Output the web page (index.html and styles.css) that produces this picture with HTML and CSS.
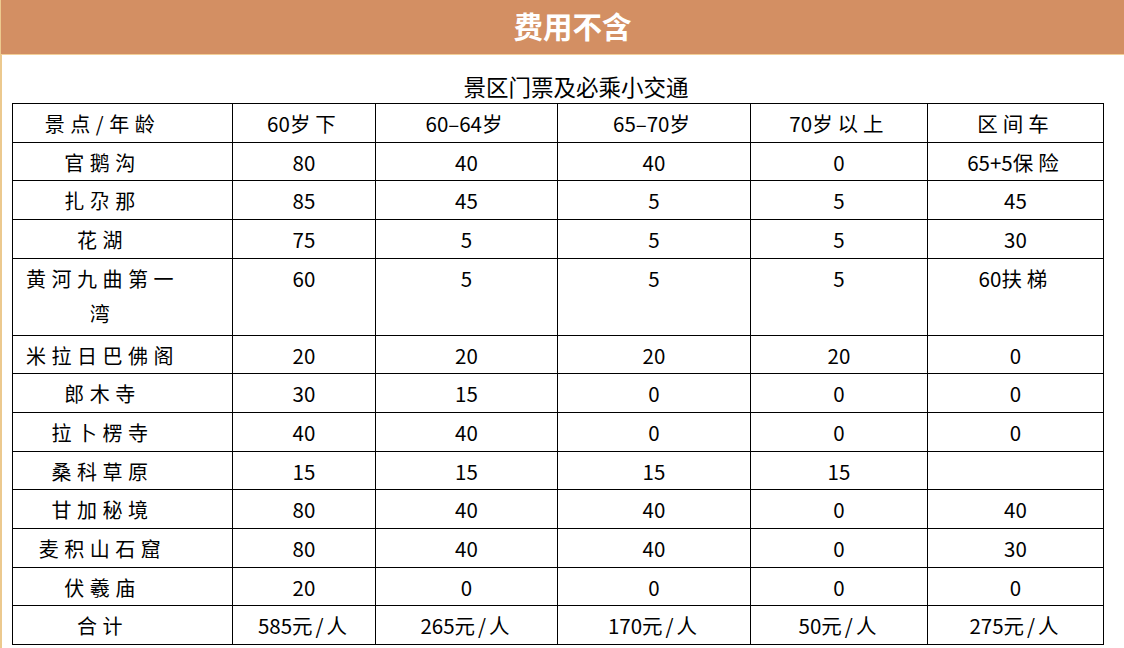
FILE: index.html
```html
<!DOCTYPE html>
<html lang="zh-CN">
<head>
<meta charset="utf-8">
<title>费用不含</title>
<link rel="stylesheet" href="styles.css">
</head>
<body>
<div class="page">
  <div class="banner">费用不含</div>
  <div class="caption">景区门票及必乘小交通</div>
  <table class="fees">
    <colgroup>
      <col class="c1"><col class="c2"><col class="c3"><col class="c4"><col class="c5"><col class="c6">
    </colgroup>
    <tr><td class="name">景点/年龄</td><td>60<span class="cj">岁下</span></td><td>60–64<span class="cj">岁</span></td><td>65–70<span class="cj">岁</span></td><td>70<span class="cj">岁以上</span></td><td class="cj">区间车</td></tr>
    <tr><td class="name">官鹅沟</td><td>80</td><td>40</td><td>40</td><td>0</td><td>65+5<span class="cj">保险</span></td></tr>
    <tr><td class="name">扎尕那</td><td>85</td><td>45</td><td>5</td><td>5</td><td>45</td></tr>
    <tr><td class="name">花湖</td><td>75</td><td>5</td><td>5</td><td>5</td><td>30</td></tr>
    <tr class="double"><td class="name">黄河九曲第一湾</td><td>60</td><td>5</td><td>5</td><td>5</td><td>60<span class="cj">扶梯</span></td></tr>
    <tr><td class="name">米拉日巴佛阁</td><td>20</td><td>20</td><td>20</td><td>20</td><td>0</td></tr>
    <tr><td class="name">郎木寺</td><td>30</td><td>15</td><td>0</td><td>0</td><td>0</td></tr>
    <tr><td class="name">拉卜楞寺</td><td>40</td><td>40</td><td>0</td><td>0</td><td>0</td></tr>
    <tr><td class="name">桑科草原</td><td>15</td><td>15</td><td>15</td><td>15</td><td></td></tr>
    <tr><td class="name">甘加秘境</td><td>80</td><td>40</td><td>40</td><td>0</td><td>40</td></tr>
    <tr><td class="name">麦积山石窟</td><td>80</td><td>40</td><td>40</td><td>0</td><td>30</td></tr>
    <tr><td class="name">伏羲庙</td><td>20</td><td>0</td><td>0</td><td>0</td><td>0</td></tr>
    <tr><td class="name">合计</td><td>585<span class="cjs">元/人</span></td><td>265<span class="cjs">元/人</span></td><td>170<span class="cjs">元/人</span></td><td>50<span class="cjs">元/人</span></td><td>275<span class="cjs">元/人</span></td></tr>
  </table>
</div>
</body>
</html>
```

FILE: styles.css
```css
html, body {
  margin: 0;
  padding: 0;
  background: #ffffff;
}

body {
  font-family: "Noto Sans CJK SC", "Noto Sans", sans-serif;
  color: #000;
}

.page {
  border-left: 2px solid #ecc98e;
  min-height: 648px;
  box-sizing: border-box;
}

.banner {
  height: 54px;
  line-height: 50px;
  background: #d38f63;
  border-bottom: 1px solid #f3cf98;
  color: #ffffff;
  font-weight: 700;
  font-size: 29.5px;
  text-align: center;
  padding-left: 20px;
  margin-left: -1px;
}

.caption {
  padding-top: 14px;
  line-height: 34px;
  height: 34px;
  font-size: 22.5px;
  text-align: center;
  padding-left: 26px;
}

.fees {
  border-collapse: collapse;
  table-layout: fixed;
  width: 1091px;
  margin-left: 10px;
  font-size: 20.5px;
}

.c1 { width: 220px; }
.c2 { width: 143px; }
.c3 { width: 182px; }
.c4 { width: 193px; }
.c5 { width: 177px; }
.c6 { width: 176px; }

.fees td {
  border: 1px solid #000;
  padding: 2px 0 0;
  height: 35.65px;
  line-height: 35.65px;
  text-align: center;
  vertical-align: top;
  white-space: normal;
}

.fees .double td {
  height: 74px;
}

.fees td.name {
  font-size: 20px;
  letter-spacing: 5.5px;
  padding: 2px 50px 0 10px;
}

.cj {
  letter-spacing: 5px;
}

.cjs {
  letter-spacing: 3px;
}
```
